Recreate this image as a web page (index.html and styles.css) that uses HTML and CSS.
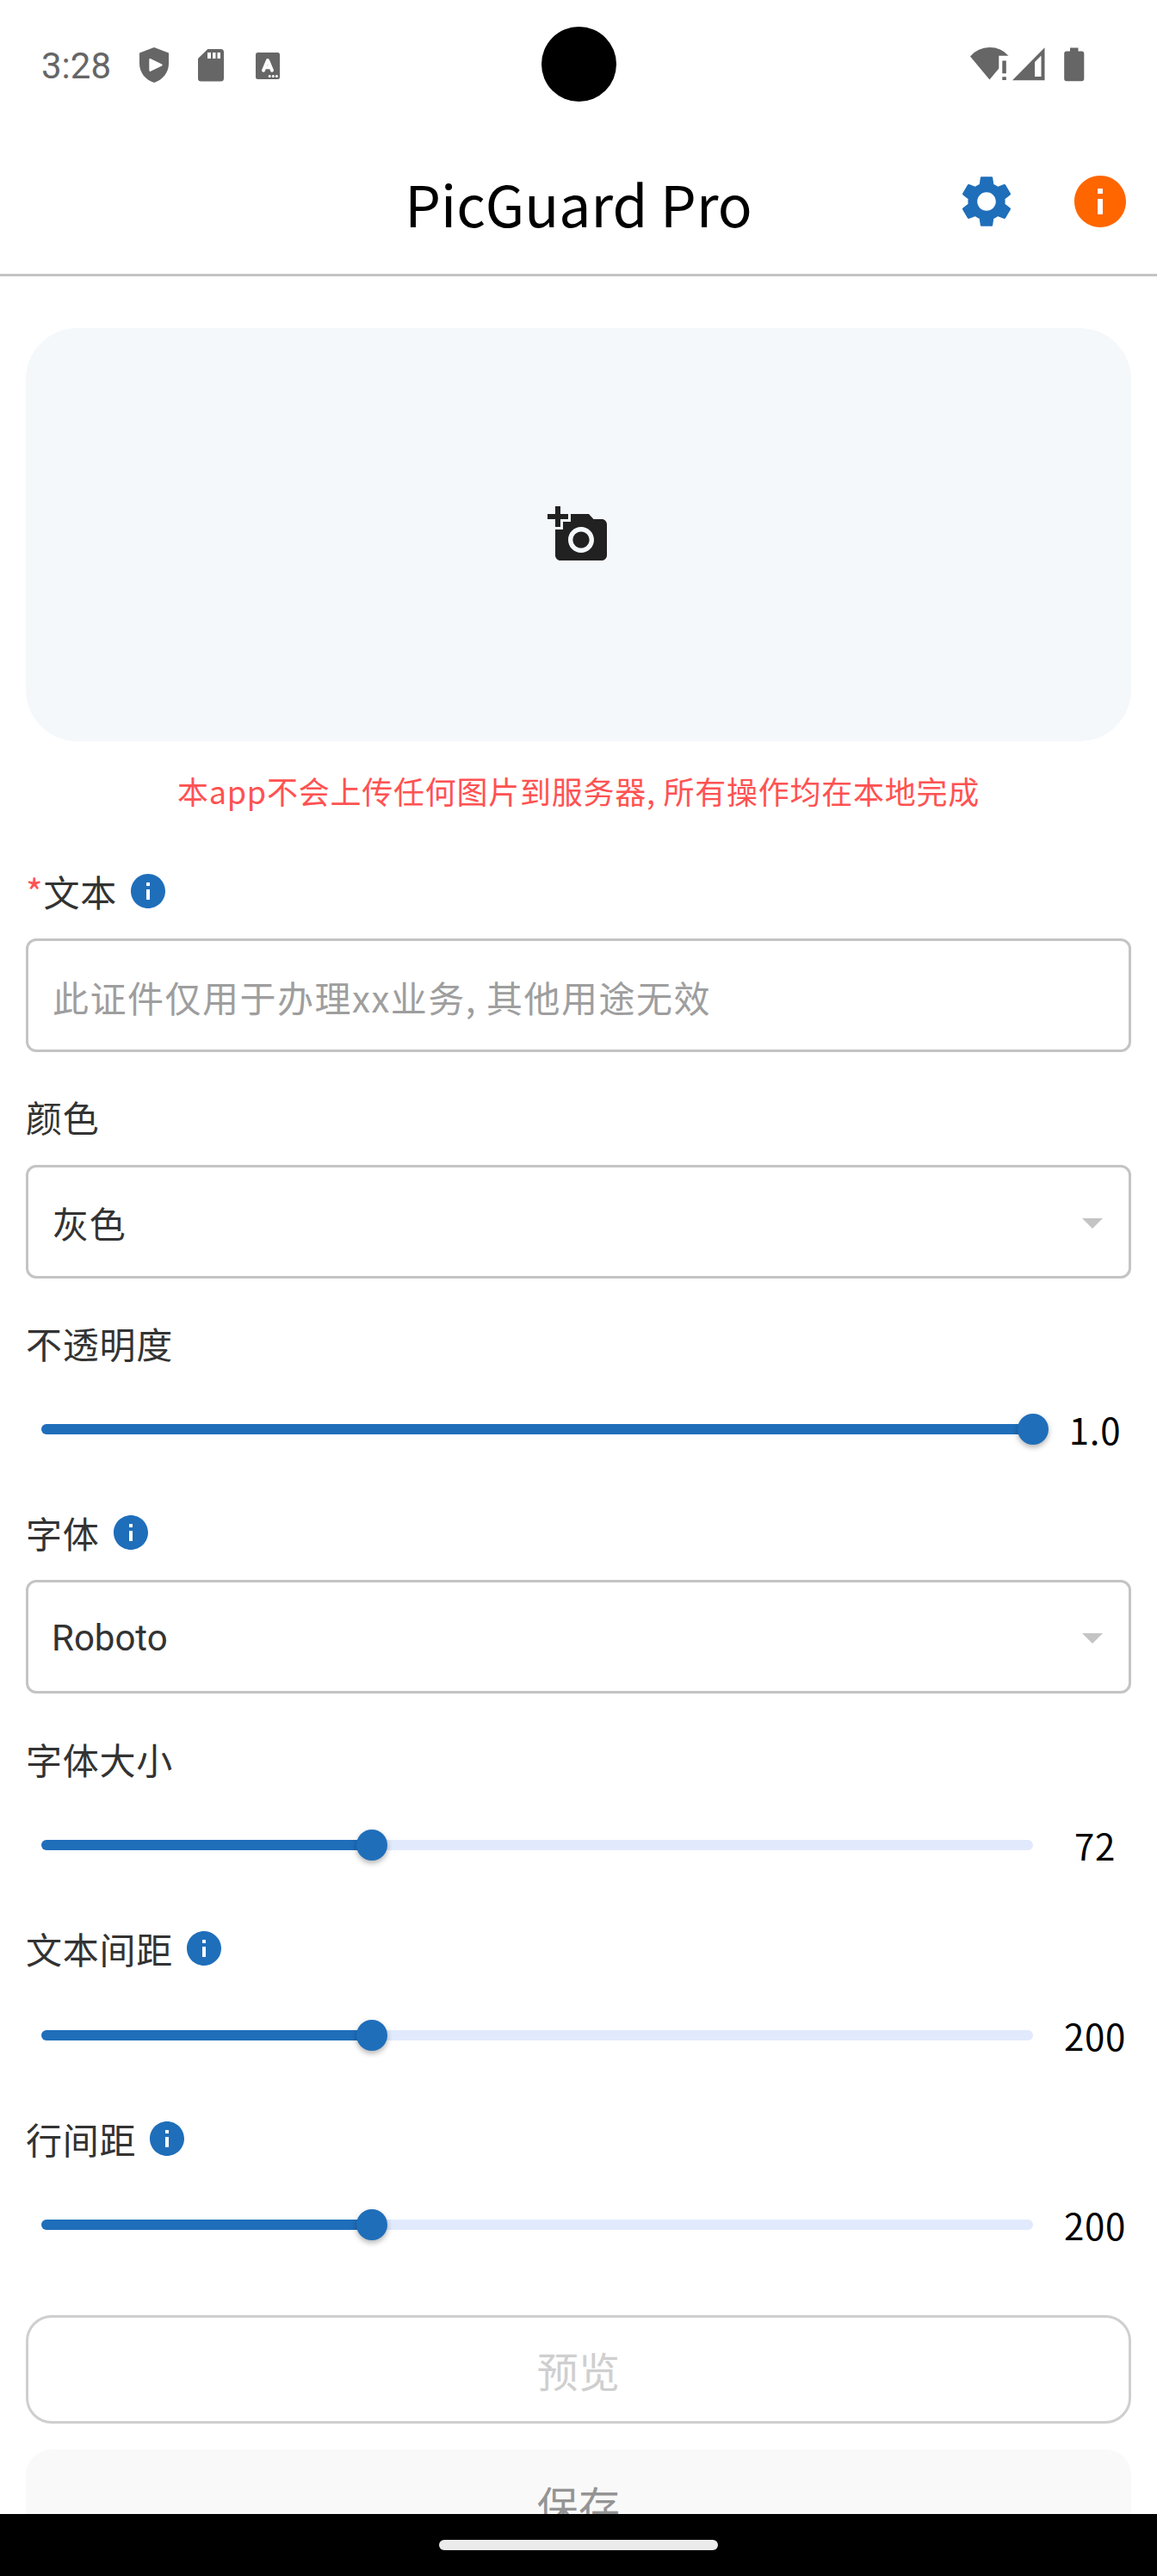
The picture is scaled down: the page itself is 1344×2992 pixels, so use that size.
FILE: index.html
```html
<!DOCTYPE html>
<html lang="zh-CN">
<head>
<meta charset="utf-8">
<title>PicGuard Pro</title>
<link rel="stylesheet" href="styles.css">
</head>
<body>
<svg class="defs" width="0" height="0" aria-hidden="true">
  <symbol id="info" viewBox="0 0 24 24"><path d="M12 2C6.48 2 2 6.48 2 12s4.48 10 10 10 10-4.480 10-10S17.520 2 12 2zm1 15h-2v-6h2v6zm0-8h-2V7h2v2z"/></symbol>
</svg>
<div class="screen">
  <div class="statusbar">
    <div class="status-left">
      <span class="clock">3:28</span>
      <svg class="shield" width="34" height="41" viewBox="0 0 34 41"><path fill-rule="evenodd" d="M17 0L34 6.500V19C34 29 27 38 17 41C7 38 0 29 0 19V6.500ZM11.300 14.500V26.500Q11.300 28.500 13.100 27.700L26 21.500Q27.600 20.500 26 19.500L13.100 13.200Q11.300 12.500 11.300 14.500Z"/></svg>
      <svg class="sdcard" width="30" height="38" viewBox="0 0 30 38"><path fill-rule="evenodd" d="M11.300 0H26.500Q30 0 30 3.500V34Q30 37.500 26.500 37.500H3.500Q0 37.500 0 34V11ZM11 4V11H15V4ZM17 4V11H20.500V4ZM22.500 4V11H26V4Z"/></svg>
      <svg class="abox" width="28" height="31" viewBox="0 0 28 31"><rect width="28" height="31" rx="2.500"/><path d="M9 20.700L14 9L19 20.700M10.500 17.300H17.500" fill="none" stroke="#fff" stroke-width="4" stroke-linecap="round" stroke-linejoin="round"/><g fill="#fff"><circle cx="16.200" cy="27.500" r="1.500"/><circle cx="20.300" cy="27.500" r="1.500"/><circle cx="24.400" cy="27.500" r="1.500"/></g></svg>
    </div>
    <div class="lens"></div>
    <div class="status-right">
      <svg width="45" height="40" viewBox="0 0 45 40"><path d="M0 10.500Q9 0 22.500 0T44.500 9.700H33.300V24.500L22.500 37.500ZM37.300 15.500H41.800V30.300H37.300ZM37.300 34.300H41.800V38H37.300Z"/></svg>
      <svg class="signal" width="38" height="40" viewBox="0 0 38 40"><path fill-rule="evenodd" d="M37.500 0.300V38.300H0ZM33.500 9.500L26 17V34H33.500Z"/></svg>
      <svg class="battery" width="24" height="40" viewBox="0 0 24 40"><path d="M7 .5H16.500V4.500H20.500Q23.300 4.500 23.300 7.300V36.500Q23.300 39.300 20.500 39.300H3Q.2 39.300 .2 36.500V7.300Q.2 4.500 3 4.500H7Z"/></svg>
    </div>
  </div>

  <header class="appbar">
    <h1>PicGuard Pro</h1>
    <div class="actions">
      <svg class="icon blue" viewBox="0 0 24 24"><path d="M19.140 12.940c.04-.3.06-.61.06-.94 0-.32-.02-.64-.07-.94l2.030-1.580c.18-.14.23-.41.12-.61l-1.920-3.320c-.12-.22-.37-.29-.59-.22l-2.390.96c-.5-.38-1.030-.7-1.620-.94l-.36-2.540c-.04-.24-.24-.41-.48-.41h-3.840c-.24 0-.43.17-.47.41l-.36 2.540c-.59.24-1.130.57-1.620.94l-2.390-.96c-.22-.08-.47 0-.59.22L2.740 8.870c-.12.21-.08.47.12.61l2.030 1.580c-.05.3-.09.63-.09.94s.02.64.07.94l-2.030 1.580c-.18.14-.23.41-.12.61l1.920 3.320c.12.22.37.29.59.22l2.390-.96c.5.38 1.030.7 1.620.94l.36 2.540c.05.24.24.41.48.41h3.840c.24 0 .44-.17.47-.41l.36-2.540c.59-.24 1.130-.56 1.620-.94l2.390.96c.22.08.47 0 .59-.22l1.920-3.320c.12-.22.07-.47-.12-.61l-2.010-1.580zM12 15.600c-1.980 0-3.600-1.620-3.600-3.600s1.620-3.600 3.600-3.600 3.600 1.620 3.600 3.600-1.620 3.600-3.600 3.600z"/></svg>
      <svg class="icon orange"><use href="#info"/></svg>
    </div>
  </header>

  <main>
    <div class="upload">
      <svg class="icon" viewBox="0 0 24 24"><path d="M3 4V1h2v3h3v2H5v3H3V6H0V4h3zm3 6V7h3V4h7l1.830 2H21c1.100 0 2 .9 2 2v12c0 1.100-.9 2-2 2H5c-1.100 0-2-.9-2-2V10h3zm7 9c2.760 0 5-2.240 5-5s-2.240-5-5-5-5 2.240-5 5 2.240 5 5 5zm-3.200-5c0 1.770 1.430 3.200 3.200 3.200s3.200-1.430 3.200-3.200-1.430-3.200-3.200-3.200-3.200 1.430-3.200 3.200z"/></svg>
    </div>
    <p class="notice">本app不会上传任何图片到服务器, 所有操作均在本地完成</p>

    <section class="group">
      <div class="label"><span><b>*</b>文本</span><svg class="tip"><use href="#info"/></svg></div>
      <div class="field input"><span>此证件仅用于办理xx业务, 其他用途无效</span></div>
    </section>
    <section class="group plain">
      <div class="label"><span>颜色</span></div>
      <div class="field"><span>灰色</span><i class="caret"></i></div>
    </section>
    <section class="group slider-group">
      <div class="label"><span>不透明度</span></div>
      <div class="row"><div class="slider" style="--value:100%"><div class="fill"></div><div class="thumb"></div></div><output>1.0</output></div>
    </section>
    <section class="group font-group">
      <div class="label"><span>字体</span><svg class="tip"><use href="#info"/></svg></div>
      <div class="field roboto"><span>Roboto</span><i class="caret"></i></div>
    </section>
    <section class="group slider-group">
      <div class="label"><span>字体大小</span></div>
      <div class="row"><div class="slider" style="--value:33.333%"><div class="fill"></div><div class="thumb"></div></div><output>72</output></div>
    </section>
    <section class="group slider-group tipped">
      <div class="label"><span>文本间距</span><svg class="tip"><use href="#info"/></svg></div>
      <div class="row"><div class="slider" style="--value:33.333%"><div class="fill"></div><div class="thumb"></div></div><output>200</output></div>
    </section>
    <section class="group slider-group tipped">
      <div class="label"><span>行间距</span><svg class="tip"><use href="#info"/></svg></div>
      <div class="row"><div class="slider" style="--value:33.333%"><div class="fill"></div><div class="thumb"></div></div><output>200</output></div>
    </section>

    <div class="buttons">
      <div class="button outline">预览</div>
      <div class="button solid">保存</div>
    </div>
  </main>

  <div class="navbar"><div class="handle"></div></div>
</div>
</body>
</html>
```
FILE: styles.css
```css
* { box-sizing: border-box; }
body {
  margin: 0;
  background: #fff;
  font-family: "Noto Sans CJK SC", "Noto Sans", sans-serif;
  font-size: 42px;
  letter-spacing: .75px;
  color: #333;
}
svg { display: block; flex: none; }
.defs { position: absolute; }
.screen {
  display: flex;
  flex-direction: column;
  width: 1344px;
  height: 2992px;
  overflow: hidden;
}

/* System status bar */
.statusbar {
  flex: none;
  display: grid;
  grid-template-columns: 1fr 87px 1fr;
  height: 150px;
  padding-bottom: 1px;
  align-items: center;
  fill: #666;
}
.status-left, .status-right { display: flex; align-items: center; }
.status-left { padding-left: 48px; }
.clock {
  font: 42px/48px Roboto, sans-serif;
  letter-spacing: 0;
  color: #666;
  width: 82px;
  margin-top: 4px;
}
.shield { margin-left: 32px; margin-top: 2px; }
.sdcard { margin-left: 34px; margin-top: 2px; }
.abox { margin-left: 37px; margin-top: 3px; }
.lens { height: 87px; border-radius: 50%; background: #000; }
.status-right { justify-content: flex-end; padding-right: 84px; margin-top: 1px; }
.signal { margin-left: 4px; }
.battery { margin-left: 22px; }

/* Title bar */
.appbar {
  flex: none;
  display: grid;
  grid-template-columns: 300px 1fr 300px;
  align-items: center;
  height: 171px;
  border-bottom: 3px solid #c4c4c4;
}
h1 {
  grid-column: 2;
  margin: 1px 0 0;
  text-align: center;
  font-size: 66px;
  font-weight: 400;
  line-height: 96px;
  letter-spacing: 0;
  color: #000;
}
.actions { display: flex; justify-content: flex-end; gap: 60px; padding-right: 30px; }
.icon { width: 72px; height: 72px; fill: #212121; }
.blue { fill: #1f6eba; }
.orange { fill: #ff6600; }

/* Form */
main { flex: 1; min-height: 0; overflow: hidden; padding: 60px 30px 0; }
.upload {
  display: flex;
  align-items: center;
  justify-content: center;
  height: 480px;
  border-radius: 60px;
  background: #f4f8fb;
}
.notice {
  margin: 0;
  height: 144px;
  line-height: 114px;
  text-align: center;
  font-size: 36px;
  color: #ff5252;
}
.group { margin-bottom: 45px; }
.label {
  display: flex;
  align-items: center;
  gap: 12px;
  height: 60px;
  margin-bottom: 25px;
  line-height: 60px;
}
.plain .label { margin-bottom: 26px; }
.label b { font-weight: 400; color: #ff5252; }
.tip { width: 48px; height: 48px; fill: #1f6eba; }
.field {
  display: flex;
  align-items: center;
  justify-content: space-between;
  height: 132px;
  padding: 0 30px 0 28px;
  border: 3px solid #c4c4c4;
  border-radius: 12px;
}
.input { padding-top: 3px; letter-spacing: 1.5px; color: #9e9e9e; }
.font-group { margin-bottom: 46px; }
.roboto span { font-family: Roboto, sans-serif; letter-spacing: 0; padding-top: 3px; }
.roboto { padding-left: 27px; }
.caret {
  margin-top: 4px;
  border: solid transparent;
  border-width: 12px 12px 0;
  border-top-color: #c4c4c4;
}
.slider-group { margin-bottom: 60px; }
.slider-group .label { margin-bottom: 40px; }
.slider-group.tipped .label { margin-bottom: 40.5px; }
.row {
  display: flex;
  align-items: center;
  justify-content: space-between;
  height: 60px;
  padding-left: 18px;
}
.slider {
  position: relative;
  width: 1152px;
  height: 12px;
  border-radius: 6px;
  background: #e1eafc;
}
.fill { width: var(--value); height: 12px; border-radius: 6px; background: #1f6eba; }
.thumb {
  position: absolute;
  left: var(--value);
  top: -12px;
  width: 36px;
  height: 36px;
  margin-left: -18px;
  border-radius: 50%;
  background: #1f6eba;
  box-shadow: 0 3px 6px rgba(0, 0, 0, .3);
}
output { width: 84px; text-align: center; line-height: 60px; color: #000; white-space: nowrap; }

.buttons { display: flex; flex-direction: column; gap: 30px; padding-top: 15px; }
.button {
  display: flex;
  align-items: center;
  justify-content: center;
  height: 126px;
  border-radius: 30px;
  font-size: 48px;
  letter-spacing: .3px;
}
.outline { border: 3px solid #cfcfcf; color: #cfcfcf; }
.solid { background: #f9f9f9; color: #949494; }

/* Gesture bar */
.navbar {
  flex: none;
  display: flex;
  justify-content: center;
  padding-top: 30px;
  height: 72px;
  background: #000;
}
.handle { width: 324px; height: 12px; border-radius: 6px; background: #ebebeb; }
```
